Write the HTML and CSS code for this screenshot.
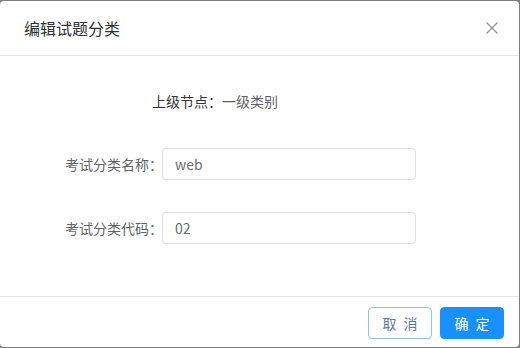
FILE: index.html
```html
<!DOCTYPE html>
<html lang="zh-CN">
<head>
<meta charset="utf-8">
<title>编辑试题分类</title>
<link rel="stylesheet" href="styles.css">
</head>
<body>
<div class="dialog">
  <div class="dialog-header">
    <span class="dialog-title">编辑试题分类</span>
    <button class="dialog-close" aria-label="关闭">
      <svg width="12" height="12" viewBox="0 0 12 12"><path d="M0.5 0.5 L11.5 11.5 M11.5 0.5 L0.5 11.5" stroke="#909399" stroke-width="1.3" fill="none"/></svg>
    </button>
  </div>
  <div class="dialog-body">
    <div class="parent-line"><span class="parent-label">上级节点：</span><span class="parent-value">一级类别</span></div>
    <div class="form-row">
      <label class="form-label">考试分类名称：</label>
      <div class="input">web</div>
    </div>
    <div class="form-row">
      <label class="form-label">考试分类代码：</label>
      <div class="input">02</div>
    </div>
  </div>
  <div class="dialog-footer">
    <button class="btn btn-default"><span class="btn-text">取消</span></button>
    <button class="btn btn-primary"><span class="btn-text">确定</span></button>
  </div>
</div>
</body>
</html>
```

FILE: styles.css
```css
html, body {
  margin: 0;
  padding: 0;
}
body {
  width: 520px;
  height: 348px;
  background: #7f7f7f;
  font-family: "Noto Sans CJK SC", "Noto Sans", sans-serif;
  overflow: hidden;
}
.dialog {
  margin-top: 1px;
  width: 519px;
  height: 346px;
  background: #fff;
  border-radius: 4px;
  display: flex;
  flex-direction: column;
}
.dialog-header {
  height: 54px;
  border-bottom: 1px solid #e6e6e6;
  display: flex;
  align-items: center;
  justify-content: space-between;
  padding: 0 21px 0 24px;
}
.dialog-title {
  font-size: 16px;
  color: #303133;
  line-height: 22px;
}
.dialog-close {
  border: 0;
  background: none;
  padding: 0;
  width: 12px;
  height: 12px;
  display: flex;
}
.dialog-body {
  height: 240px;
  display: flex;
  flex-direction: column;
  box-sizing: border-box;
  padding-top: 35px;
}
.parent-line {
  padding-left: 152px;
  font-size: 14px;
  line-height: 20px;
  height: 20px;
}
.parent-label {
  color: #333;
}
.parent-value {
  color: #606266;
}
.form-row {
  display: flex;
  align-items: center;
  height: 32px;
  margin-top: 32px;
}
.parent-line + .form-row {
  margin-top: 37px;
}
.form-label {
  width: 162px;
  box-sizing: border-box;
  padding-left: 65px;
  font-size: 14px;
  color: #606266;
  white-space: nowrap;
}
.input {
  width: 254px;
  height: 32px;
  box-sizing: border-box;
  border: 1px solid #dcdfe6;
  border-radius: 4px;
  padding: 0 12px;
  font-size: 14px;
  line-height: 30px;
  color: #6b6d72;
}
.dialog-footer {
  border-top: 1px solid #e6e6e6;
  display: flex;
  justify-content: flex-end;
  gap: 8px;
  padding: 10px 15px 0 0;
}
.btn {
  width: 64px;
  height: 32px;
  box-sizing: border-box;
  border-radius: 4px;
  font-family: inherit;
  font-size: 14px;
  padding: 0;
  display: flex;
  align-items: center;
  justify-content: center;
}
.btn-text {
  letter-spacing: 7px;
  margin-right: -7px;
}
.btn-default {
  background: #fff;
  border: 1px solid #8ec0ee;
  color: #5b7898;
}
.btn-primary {
  background: #1890ff;
  border: 1px solid #1890ff;
  color: #fff;
}
```
